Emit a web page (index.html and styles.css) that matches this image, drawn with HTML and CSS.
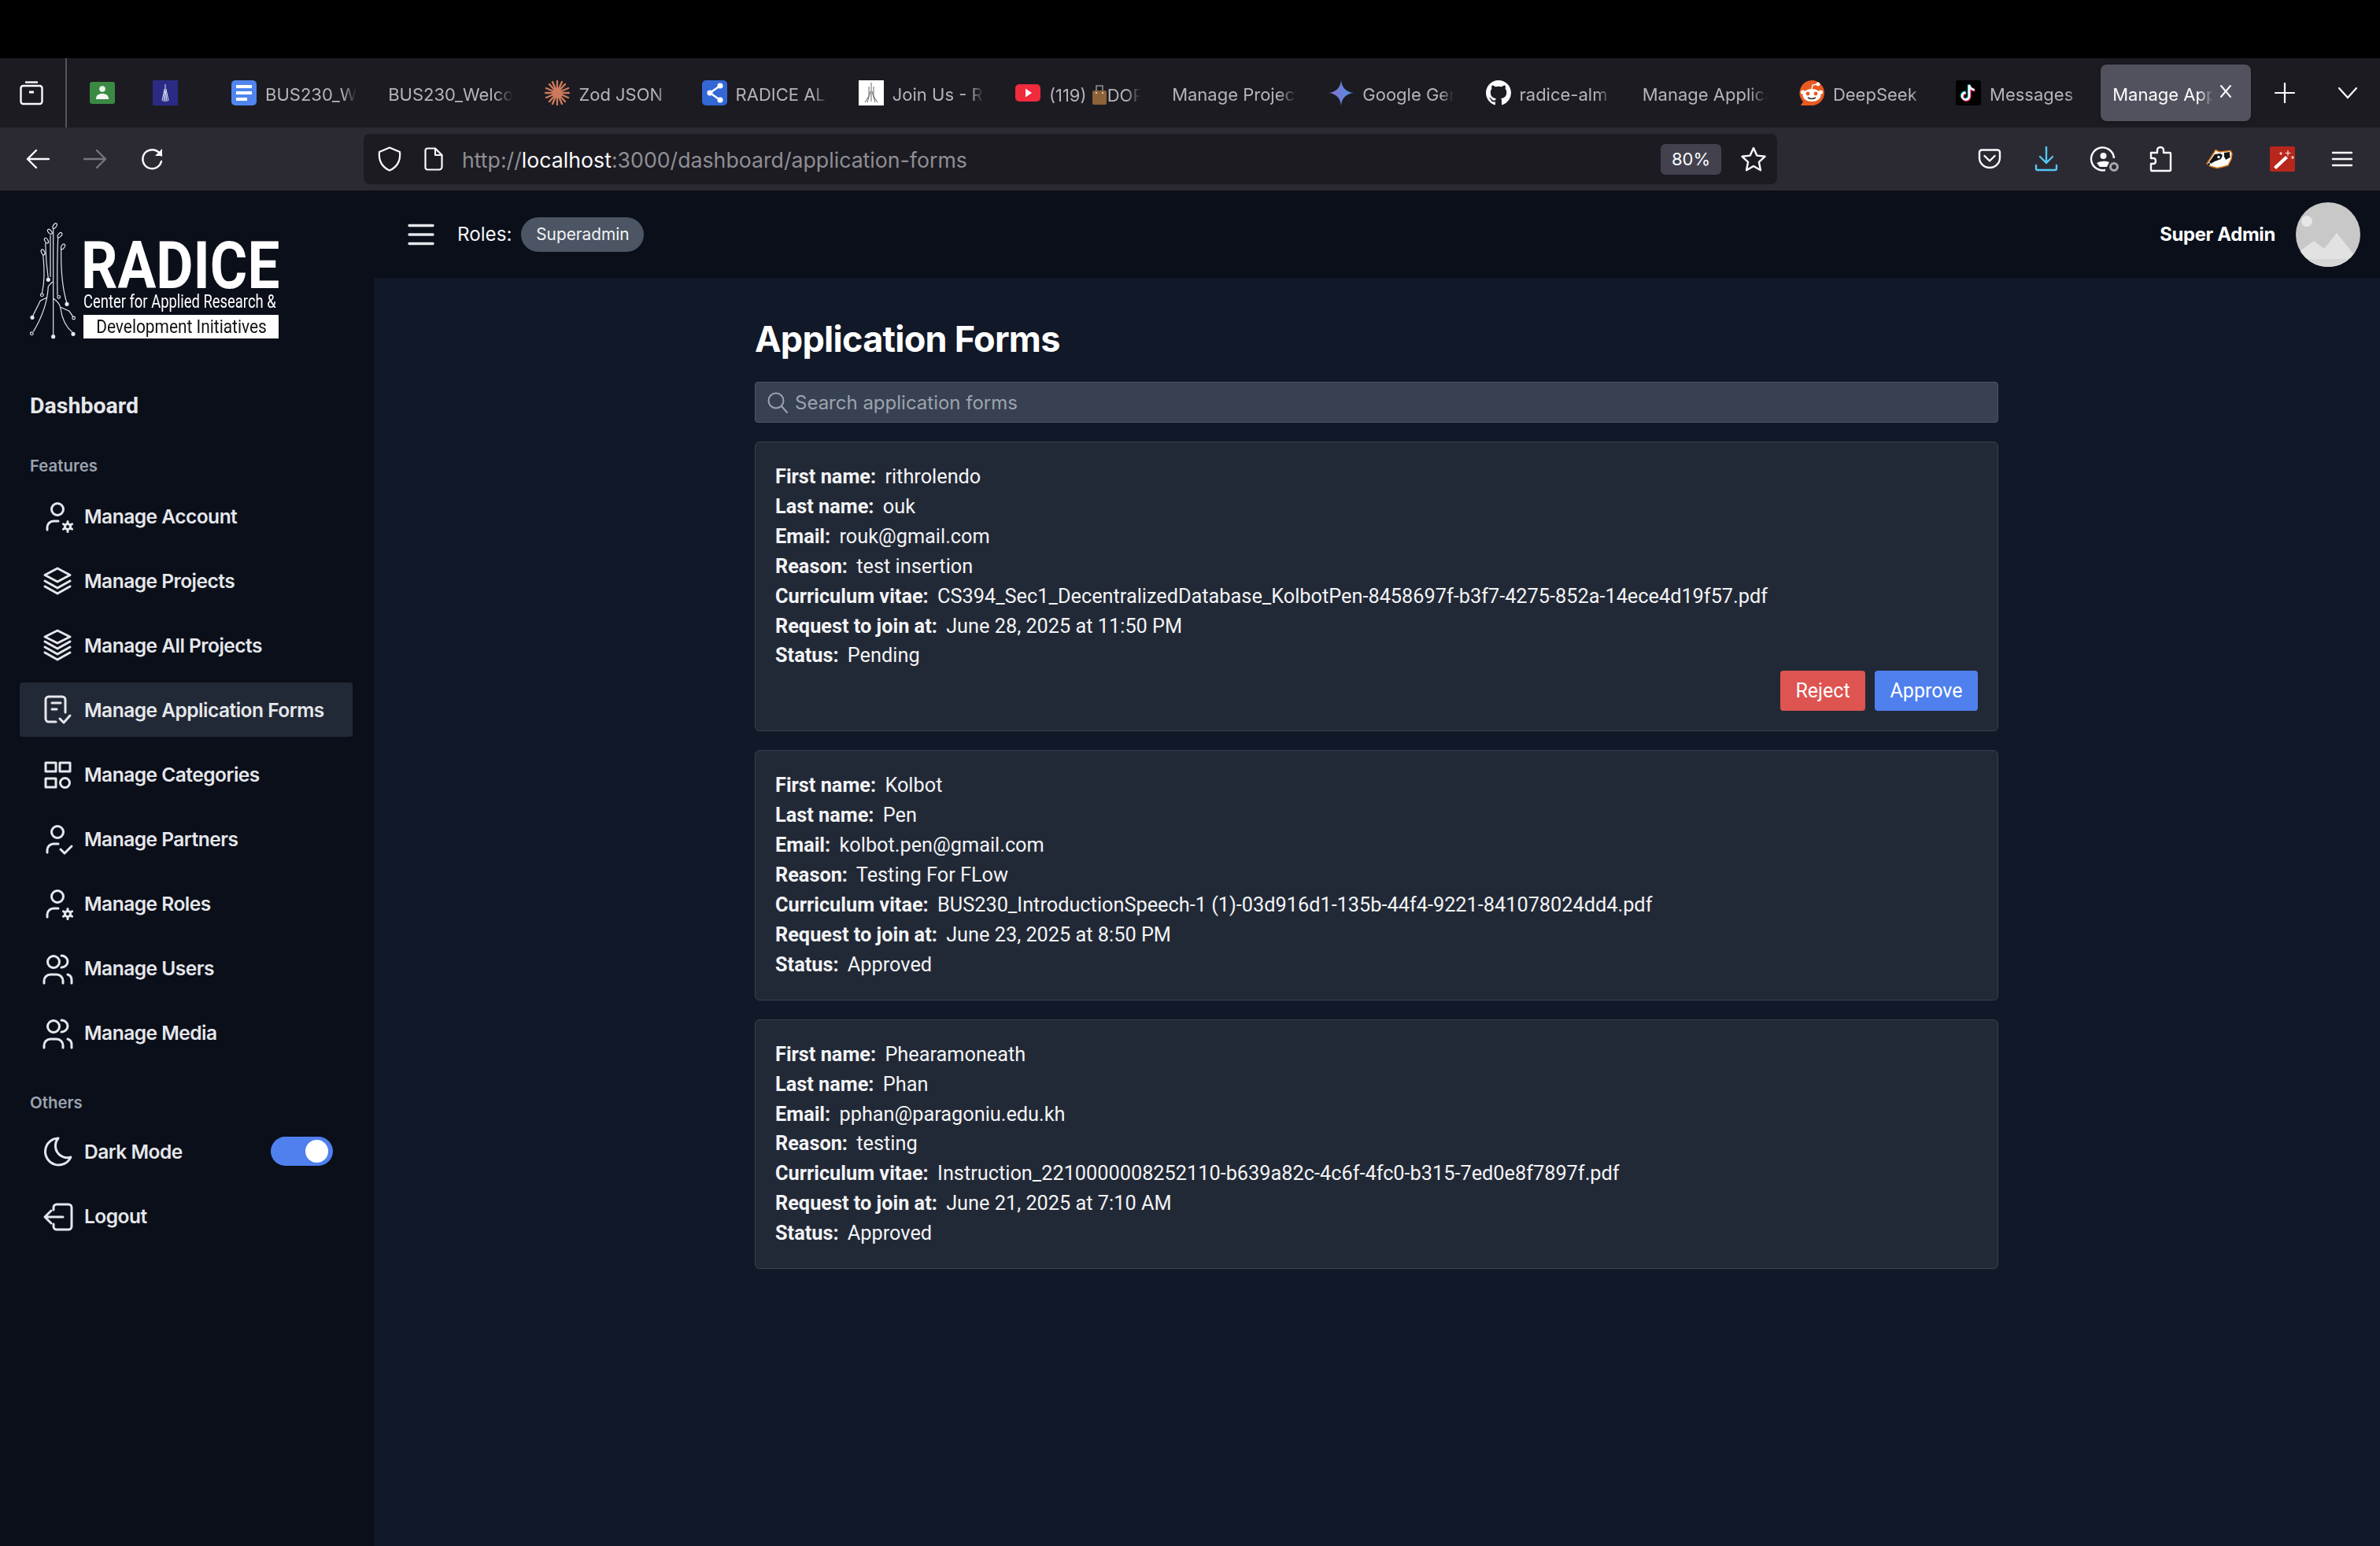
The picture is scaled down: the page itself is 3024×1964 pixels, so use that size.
FILE: index.html
```html
<!DOCTYPE html>
<html lang="en">
<head>
    <meta charset="UTF-8">
    <title>Manage Application Forms</title>
    <link rel="stylesheet" href="styles.css">
</head>
<body>
    <div class="top-black"></div>

    <!-- browser tabs -->
    <div class="tabbar">
        <div class="view-btn">
            <svg width="32" height="32" viewBox="0 0 32 32" fill="none" stroke="#fbfbfe" stroke-width="2.4"><path d="M8 2.5h16"/><rect x="2.5" y="7" width="27" height="23" rx="3"/><path d="M13 15h6" stroke-width="3"/></svg>
        </div>
        <div class="pinned">
            <svg width="32" height="32" viewBox="0 0 32 32"><rect y="2" width="32" height="28" rx="3" fill="#3b8a44"/><circle cx="16" cy="11" r="3.800" fill="#eef5ee"/><path d="M8 24c0-5 3-7 8-7s8 2 8 7z" fill="#f2f7f2"/></svg>
        </div>
        <div class="pinned">
            <svg width="32" height="32" viewBox="0 0 32 32" fill="none"><rect width="32" height="32" fill="#2b2b85"/><path d="M16 5v22M15 11l-3 15M17 11l3 15M15.500 14l-1.500 13M16.500 14l1.500 13" stroke="#e4e6fa" stroke-width="1"/></svg>
        </div>

        <div class="tab">
            <svg class="tab-icon" width="32" height="32" viewBox="0 0 32 32"><rect width="32" height="32" rx="5" fill="#5085ee"/><path d="M6 6h20v4H6zM6 14h20v4H6zM6 22h14v4H6z" fill="#fff"/></svg>
            <span class="tab-text">BUS230_Welcome</span>
        </div>
        <div class="tab">
            <span class="tab-text">BUS230_Welcome</span>
        </div>
        <div class="tab">
            <svg class="tab-icon" width="32" height="32" viewBox="0 0 32 32" stroke="#cc7a5c" stroke-width="2.4" stroke-linecap="round"><path d="M16 1v30M1 16h30M6 5l20 22M26 5L6 27M10 2l12 28M22 2L10 30M2 10l28 12M30 10L2 22"/></svg>
            <span class="tab-text">Zod JSON Schema</span>
        </div>
        <div class="tab">
            <svg class="tab-icon" width="32" height="32" viewBox="0 0 32 32"><rect width="32" height="32" rx="5" fill="#3367d6"/><path d="M23 7L10 16l13 9" fill="none" stroke="#fff" stroke-width="2.4"/><circle cx="23" cy="7" r="3.6" fill="#fff"/><circle cx="10" cy="16" r="3.6" fill="#fff"/><circle cx="23" cy="25" r="3.6" fill="#fff"/></svg>
            <span class="tab-text">RADICE ALM</span>
        </div>
        <div class="tab">
            <svg class="tab-icon" width="32" height="32" viewBox="0 0 32 32" fill="none"><rect width="32" height="32" fill="#fff"/><path d="M16 3v24M13 8v12l-5 8M19 8v12l5 8M15 14l-4 14M17 14l4 14" stroke="#666" stroke-width="1"/></svg>
            <span class="tab-text">Join Us - RADICE</span>
        </div>
        <div class="tab">
            <svg class="tab-icon" width="32" height="32" viewBox="0 0 32 32"><rect y="5" width="32" height="22" rx="5" fill="#ef2b3c"/><path d="M13 10.500l8 5.500-8 5.500z" fill="#fff"/></svg>
            <span class="tab-text">(119) <svg class="bag" width="20" height="28" viewBox="0 0 20 28" fill="none"><path d="M6 10V3h8v7" stroke="#8d8f96" stroke-width="1.600"/><rect x="1" y="9" width="18" height="18" rx="2" fill="#8d6239"/><circle cx="6" cy="12" r="1.200" fill="#d7c0a0"/><circle cx="14" cy="12" r="1.200" fill="#d7c0a0"/></svg>DOPE</span>
        </div>
        <div class="tab">
            <span class="tab-text">Manage Projects</span>
        </div>
        <div class="tab">
            <svg class="tab-icon" width="32" height="32" viewBox="0 0 32 32"><defs><linearGradient id="gem" x1="0" y1="0.5" x2="1" y2="0.5"><stop offset="0" stop-color="#8a6fd0"/><stop offset="1" stop-color="#4c8fe0"/></linearGradient></defs><path d="M16 0c1 9 6 15 16 16-10 1-15 7-16 16-1-9-6-15-16-16 10-1 15-7 16-16z" fill="url(#gem)"/></svg>
            <span class="tab-text">Google Gemini</span>
        </div>
        <div class="tab">
            <svg class="tab-icon" width="32" height="32" viewBox="0 0 16 16"><path fill="#fbfbfe" d="M8 0C3.58 0 0 3.58 0 8c0 3.54 2.29 6.53 5.47 7.59.4.07.55-.17.55-.38 0-.19-.01-.82-.01-1.49-2.01.37-2.53-.49-2.69-.94-.09-.23-.48-.94-.82-1.13-.28-.15-.68-.52-.01-.53.63-.01 1.08.58 1.23.82.72 1.21 1.87.87 2.33.66.07-.52.28-.87.51-1.07-1.78-.2-3.64-.89-3.64-3.95 0-.87.31-1.59.82-2.15-.08-.2-.36-1.02.08-2.12 0 0 .67-.21 2.2.82.64-.18 1.32-.27 2-.27.68 0 1.36.09 2 .27 1.53-1.04 2.2-.82 2.2-.82.44 1.1.16 1.92.08 2.12.51.56.82 1.27.82 2.15 0 3.07-1.87 3.75-3.65 3.95.29.25.54.73.54 1.48 0 1.07-.01 1.93-.01 2.2 0 .21.15.46.55.38A8.013 8.013 0 0016 8c0-4.42-3.58-8-8-8z"/></svg>
            <span class="tab-text">radice-alm</span>
        </div>
        <div class="tab">
            <span class="tab-text">Manage Applications</span>
        </div>
        <div class="tab">
            <svg class="tab-icon" width="32" height="32" viewBox="0 0 32 32"><path d="M16 0a16 16 0 0 1 0 32H2l3-5A16 16 0 0 1 16 0z" fill="#ea5a21"/><path d="M16 11l1-5 6-1" fill="none" stroke="#fff" stroke-width="1.400"/><circle cx="24" cy="5" r="2.400" fill="#fff"/><circle cx="4.500" cy="15" r="2.600" fill="#fff"/><circle cx="27.500" cy="15" r="2.600" fill="#fff"/><ellipse cx="16" cy="19" rx="11.500" ry="8" fill="#fff"/><circle cx="11" cy="17" r="2.400" fill="#ea5a21"/><circle cx="21" cy="17" r="2.400" fill="#ea5a21"/><path d="M11 22q5 3 10 0" stroke="#3a2a25" stroke-width="1.600" fill="none"/></svg>
            <span class="tab-text">DeepSeek</span>
        </div>
        <div class="tab">
            <svg class="tab-icon" width="32" height="32" viewBox="0 0 32 32" fill="none" stroke-width="3.200"><rect width="32" height="32" rx="3" fill="#000"/><path d="M16.500 5.500v14a4.500 4.500 0 1 1-4.500-4.500M16.500 5.500q1 5.500 6.500 6" stroke="#25f4ee"/><path d="M18 7v14a4.500 4.500 0 1 1-4.500-4.500M18 7q1 5.500 6.500 6" stroke="#ee1d52"/><path d="M17.200 6.200v14a4.500 4.500 0 1 1-4.500-4.500M17.200 6.200q1 5.500 6.500 6" stroke="#fff" stroke-width="2.400"/></svg>
            <span class="tab-text">Messages | TikTok</span>
        </div>
        <div class="tab tab-active">
            <span class="tab-text">Manage Applications</span>
            <svg class="tab-close" width="18" height="18" viewBox="0 0 18 18" stroke="#fbfbfe" stroke-width="2" stroke-linecap="round"><path d="M3 2l12 14M15 2L3 16"/></svg>
        </div>
        <svg class="new-tab" width="26" height="26" viewBox="0 0 26 26" stroke="#fbfbfe" stroke-width="2.200" stroke-linecap="round"><path d="M13 1v24M1 13h24"/></svg>
        <svg class="all-tabs" width="26" height="16" viewBox="0 0 26 16" fill="none" stroke="#fbfbfe" stroke-width="2.200" stroke-linecap="round"><path d="M2 2l11 12L24 2"/></svg>
    </div>

    <!-- browser toolbar -->
    <div class="navbar">
        <div class="nav-arrows">
            <svg width="30" height="26" viewBox="0 0 30 26" fill="none" stroke="#fbfbfe" stroke-width="2.400" stroke-linecap="round" stroke-linejoin="round"><path d="M29 13H2M13 2L2 13l11 11"/></svg>
            <svg width="30" height="26" viewBox="0 0 30 26" fill="none" stroke="#77767d" stroke-width="2.400" stroke-linecap="round" stroke-linejoin="round"><path d="M1 13h27M17 2l11 11-11 11"/></svg>
            <svg width="30" height="30" viewBox="0 0 30 30" fill="none" stroke="#fbfbfe" stroke-width="2.400" stroke-linecap="round" stroke-linejoin="round"><path d="M26 18A12 12 0 1 1 17 3.500c4 1 7 3.500 9 7"/><path d="M27 2v9h-9" fill="#fbfbfe" stroke="none"/></svg>
        </div>
        <div class="urlbar">
            <svg width="30" height="32" viewBox="0 0 30 32" fill="none" stroke="#fbfbfe" stroke-width="2.200" stroke-linejoin="round"><path d="M15 1.500L28 7c1 10-3 19-13 23.500C5 26 1 17 2 7z"/></svg>
            <svg class="page-icon" width="24" height="30" viewBox="0 0 24 30" fill="none" stroke="#fbfbfe" stroke-width="2.200" stroke-linejoin="round"><path d="M4 1.500h10l8.500 8.500v15a3.500 3.500 0 0 1-3.500 3.500H4A2.500 2.500 0 0 1 1.500 26V4A2.500 2.500 0 0 1 4 1.500zM14 1.500V10h8.500"/></svg>
            <span class="url">http://<b class="url-host">localhost</b>:3000/dashboard/application-forms</span>
            <span class="zoom-badge">80%</span>
            <svg class="star" width="32" height="32" viewBox="0 0 32 32" fill="none" stroke="#fbfbfe" stroke-width="2.400" stroke-linejoin="round"><path d="M16 2l4.300 9.600 10.200 1.200-7.600 7 2.100 10.400L16 25l-9 5.200 2.100-10.400-7.600-7 10.200-1.200z"/></svg>
        </div>
        <div class="nav-tools">
            <svg width="40" height="34" viewBox="0 0 40 34" fill="none" stroke="#fbfbfe" stroke-width="2.400" stroke-linecap="round" stroke-linejoin="round"><path d="M10 5.500h20a3 3 0 0 1 3 3v7c0 7-6 12.500-13 12.500S7 22.500 7 15.500v-7a3 3 0 0 1 3-3zM13.500 13l6.500 6.500 6.500-6.500"/></svg>
            <svg width="40" height="34" viewBox="3 0 40 34" fill="none" stroke="#53c8f4" stroke-width="2.400" stroke-linecap="round" stroke-linejoin="round"><path d="M20 2v20M12 14l8 8 8-8M7 25v4a2 2 0 0 0 2 2h22a2 2 0 0 0 2-2v-4"/></svg>
            <svg width="40" height="34" viewBox="3 0 40 34" fill="none" stroke="#fbfbfe" stroke-width="2.400"><path d="M21 31A14.500 14.500 0 1 1 32 16"/><circle cx="18.500" cy="13" r="4" fill="#fbfbfe" stroke="none"/><path d="M10 22q8-4 16-1l-3 6H14z" fill="#fbfbfe" stroke="none"/><circle cx="32" cy="27" r="4.500" stroke="#a8a8ae" stroke-width="3"/></svg>
            <svg width="40" height="34" viewBox="7 0 40 34" fill="none" stroke="#fbfbfe" stroke-width="2.400" stroke-linejoin="round"><path d="M20 2c-3 0-4 2-4 4v3H8v7h3c4 0 4 7 0 7H8v8a1 1 0 0 0 1 1h23a1 1 0 0 0 1-1V10a1 1 0 0 0-1-1h-8V6c0-2-1-4-4-4z"/></svg>
            <svg width="40" height="34" viewBox="6 0 40 34"><path d="M4 23L13 9l2-3.500L20 8l5-.5 9-1 2 3.500-1 7-4 8-7 2-7 1.500L8 26z" fill="#fff" stroke="#d97d22" stroke-width="1.500" stroke-linejoin="round"/><path d="M7 21l7-10 7-1 3 2-2 5-8 3-5 3zM26 9l7-1 .5 7-5.500 3-2-4z" fill="#141414"/><circle cx="19" cy="14.500" r="1.700" fill="#fff"/><circle cx="6.500" cy="23.500" r="1.500" fill="#141414"/></svg>
            <svg width="40" height="34" viewBox="1 0 40 34"><rect x="4" y="1" width="32" height="32" rx="2" fill="#b8261c"/><path d="M9 27L24 13l3 3L12 30z" fill="#fff"/><path d="M27 6v7M23.500 9.500h7M33 13v4M31 15h4M18 8v4M16 10h4" stroke="#f8e4e0" stroke-width="1.200"/></svg>
            <svg width="40" height="28" viewBox="0 0 40 28" stroke="#fbfbfe" stroke-width="2.400" stroke-linecap="round"><path d="M8 6h24M8 14h24M8 22h24"/></svg>
        </div>
    </div>

    <div class="app">
        <aside class="sidebar">
            <div class="logo">
                <svg class="logo-tree" width="64" height="150" viewBox="110 90 190 450" fill="none" stroke="#e9e9ec" stroke-width="3.500">
                    <path d="M204 522V112M193 140v160M222 150q-4 100-2 220M234 192q-2 130 22 208M174 170q2 70 11 136M165 214q10 90-4 148M201 318l-16 17q-4 85-57 173M180 378l-25 12q-15 30-30 60M205 382q25 18 27 38 8 60 46 92M232 415l33 15 15 22"/>
                    <ellipse cx="210" cy="105" rx="6" ry="11" transform="rotate(35 210 105)"/>
                    <ellipse cx="191" cy="127" rx="6" ry="11" transform="rotate(-40 191 127)"/>
                    <ellipse cx="229" cy="140" rx="6" ry="11" transform="rotate(40 229 140)"/>
                    <ellipse cx="178" cy="161" rx="6" ry="11" transform="rotate(-30 178 161)"/>
                    <ellipse cx="241" cy="184" rx="6" ry="11" transform="rotate(30 241 184)"/>
                    <ellipse cx="165" cy="205" rx="6" ry="11" transform="rotate(-25 165 205)"/>
                    <circle cx="204" cy="527" r="6" fill="#e9e9ec"/>
                    <circle cx="225" cy="376" r="5.500"/>
                    <circle cx="256" cy="403" r="6" fill="#e9e9ec"/>
                    <circle cx="185" cy="310" r="6" fill="#e9e9ec"/>
                    <circle cx="161" cy="368" r="5.500"/>
                    <circle cx="122" cy="515" r="5.500"/>
                    <circle cx="124" cy="454" r="6" fill="#e9e9ec"/>
                    <circle cx="280" cy="517" r="6" fill="#e9e9ec"/>
                    <circle cx="282" cy="456" r="5.500"/>
                </svg>
                <div class="logo-words">
                    <div class="logo-name">RADICE</div>
                    <div class="logo-line">Center for Applied Research &amp;</div>
                    <div class="logo-box"><span class="logo-box-text">Development Initiatives</span></div>
                </div>
            </div>

            <div class="side-title">Dashboard</div>
            <div class="side-label">Features</div>

            <ul class="menu">
                <li class="menu-item">
                    <svg class="menu-icon" viewBox="0 0 44 44"><circle cx="20" cy="13" r="7.500"/><path d="M7 39v-3a8 8 0 0 1 8-8h6"/><circle cx="33" cy="35" r="3.500"/><path d="M33 28.500v2M33 39.500v2M27.400 31.700l1.700 1M36.900 37.300l1.700 1M27.400 38.300l1.700-1M36.900 32.700l1.700-1"/></svg>
                    Manage Account
                </li>
                <li class="menu-item">
                    <svg class="menu-icon" viewBox="0 0 44 44"><path d="M20 6l16 8.500-16 8.500-16-8.500zM4 22l16 9 16-9M4 29l16 9 16-9"/></svg>
                    Manage Projects
                </li>
                <li class="menu-item">
                    <svg class="menu-icon" viewBox="0 0 44 44"><path d="M20 3l16 8-16 8-16-8zM4 17l16 9 16-9M4 24l16 9 16-9M4 31l16 9 16-9"/></svg>
                    Manage All Projects
                </li>
                <li class="menu-item menu-active">
                    <svg class="menu-icon" viewBox="0 0 44 44"><path d="M18 37H9a4 4 0 0 1-4-4V9a4 4 0 0 1 4-4h17a4 4 0 0 1 4 4v16M13 13h11M13 21h6M23 33l5 5 8-9"/></svg>
                    Manage Application Forms
                </li>
                <li class="menu-item">
                    <svg class="menu-icon" viewBox="0 0 44 44"><rect x="5" y="7" width="13" height="11"/><rect x="23" y="7" width="13" height="11"/><rect x="5" y="27" width="13" height="11"/><circle cx="29.500" cy="32.500" r="6"/></svg>
                    Manage Categories
                </li>
                <li class="menu-item">
                    <svg class="menu-icon" viewBox="0 0 44 44"><circle cx="20" cy="13" r="7.500"/><path d="M7 39v-3a8 8 0 0 1 8-8h6M24 35l5 5 9-9"/></svg>
                    Manage Partners
                </li>
                <li class="menu-item">
                    <svg class="menu-icon" viewBox="0 0 44 44"><circle cx="20" cy="13" r="7.500"/><path d="M7 39v-3a8 8 0 0 1 8-8h6"/><circle cx="33" cy="35" r="3.500"/><path d="M33 28.500v2M33 39.500v2M27.400 31.700l1.700 1M36.900 37.300l1.700 1M27.400 38.300l1.700-1M36.900 32.700l1.700-1"/></svg>
                    Manage Roles
                </li>
                <li class="menu-item">
                    <svg class="menu-icon" viewBox="0 0 44 44"><circle cx="15" cy="14" r="7.500"/><path d="M25 6c4 0 8 3 8 7.500S29 21 25 21M3 41v-3a8 8 0 0 1 8-8h8a8 8 0 0 1 8 8v3M33 30c3 1 5 4 5 7v4"/></svg>
                    Manage Users
                </li>
                <li class="menu-item">
                    <svg class="menu-icon" viewBox="0 0 44 44"><circle cx="15" cy="14" r="7.500"/><path d="M25 6c4 0 8 3 8 7.500S29 21 25 21M3 41v-3a8 8 0 0 1 8-8h8a8 8 0 0 1 8 8v3M33 30c3 1 5 4 5 7v4"/></svg>
                    Manage Media
                </li>
            </ul>

            <div class="side-label others-label">Others</div>
            <ul class="menu">
                <li class="menu-item">
                    <svg class="menu-icon" viewBox="0 0 44 44"><path d="M21 5A17 17 0 1 0 37 29 A 15 15 0 0 1 21 5z"/></svg>
                    Dark Mode
                    <span class="toggle"><span class="toggle-knob"></span></span>
                </li>
                <li class="menu-item">
                    <svg class="menu-icon" viewBox="0 0 44 44"><path d="M15 14v-3a4 4 0 0 1 4-4h15a4 4 0 0 1 4 4v24a4 4 0 0 1-4 4H19a4 4 0 0 1-4-4v-3M27 23H4M12 15l-8 8 8 8"/></svg>
                    Logout
                </li>
            </ul>
        </aside>

        <div class="right">
            <header class="topbar">
                <svg class="burger" width="34" height="28" viewBox="0 0 34 28" stroke="#e5e7eb" stroke-width="3.400" stroke-linecap="round"><path d="M2 2.500h30M2 14h30M2 25.500h30"/></svg>
                <span class="roles">Roles:</span>
                <span class="role-pill">Superadmin</span>
                <span class="admin-name">Super Admin</span>
                <svg class="avatar" width="82" height="82" viewBox="0 0 82 82"><defs><clipPath id="av"><circle cx="41" cy="41" r="41"/></clipPath></defs><g clip-path="url(#av)"><rect width="82" height="82" fill="#c8c8c8"/><circle cx="14" cy="24" r="7" fill="#e6e6e6"/><path d="M5 82V62l18-13 13 10 16-20 24 30v13z" fill="#e2e2e2"/><path d="M0 72h82v10H0z" fill="#d6d6d6"/></g></svg>
            </header>

            <main class="content">
                <h1 class="page-title">Application Forms</h1>
                <div class="search">
                    <svg width="26" height="28" viewBox="0 0 26 28" fill="none" stroke="#9ca3af" stroke-width="2" stroke-linecap="round"><circle cx="11" cy="12" r="9.500"/><path d="M18 19l7 8"/></svg>
                    <span>Search application forms</span>
                </div>

                <div class="form-card">
                    <p><b>First name:</b> rithrolendo</p>
                    <p><b>Last name:</b> ouk</p>
                    <p><b>Email:</b> rouk@gmail.com</p>
                    <p><b>Reason:</b> test insertion</p>
                    <p><b>Curriculum vitae:</b> CS394_Sec1_DecentralizedDatabase_KolbotPen-8458697f-b3f7-4275-852a-14ece4d19f57.pdf</p>
                    <p><b>Request to join at:</b> June 28, 2025 at 11:50 PM</p>
                    <p><b>Status:</b> Pending</p>
                    <div class="card-actions">
                        <button class="btn btn-reject">Reject</button>
                        <button class="btn btn-approve">Approve</button>
                    </div>
                </div>

                <div class="form-card">
                    <p><b>First name:</b> Kolbot</p>
                    <p><b>Last name:</b> Pen</p>
                    <p><b>Email:</b> kolbot.pen@gmail.com</p>
                    <p><b>Reason:</b> Testing For FLow</p>
                    <p><b>Curriculum vitae:</b> BUS230_IntroductionSpeech-1 (1)-03d916d1-135b-44f4-9221-841078024dd4.pdf</p>
                    <p><b>Request to join at:</b> June 23, 2025 at 8:50 PM</p>
                    <p><b>Status:</b> Approved</p>
                </div>

                <div class="form-card">
                    <p><b>First name:</b> Phearamoneath</p>
                    <p><b>Last name:</b> Phan</p>
                    <p><b>Email:</b> pphan@paragoniu.edu.kh</p>
                    <p><b>Reason:</b> testing</p>
                    <p><b>Curriculum vitae:</b> Instruction_2210000008252110-b639a82c-4c6f-4fc0-b315-7ed0e8f7897f.pdf</p>
                    <p><b>Request to join at:</b> June 21, 2025 at 7:10 AM</p>
                    <p><b>Status:</b> Approved</p>
                </div>
            </main>
        </div>
    </div>
</body>
</html>
```

FILE: styles.css
```css
* {
    box-sizing: border-box;
}
html, body {
    margin: 0;
    height: 100%;
}
body {
    display: flex;
    flex-direction: column;
    width: 3024px;
    height: 1964px;
    overflow: hidden;
    background: #111827;
    color: #e5e7eb;
    font-family: "Inter", sans-serif;
}
.top-black {
    height: 74px;
    background: #000;
}

/* browser tabs */
.tabbar {
    display: flex;
    align-items: center;
    height: 88px;
    background: #1c1b22;
}
.view-btn {
    display: flex;
    align-items: center;
    width: 85px;
    height: 88px;
    padding-left: 24px;
    border-right: 2px solid #55545c;
}
.pinned {
    width: 80px;
    padding-left: 29px;
    display: flex;
}
.tab {
    display: flex;
    align-items: center;
    flex: none;
    width: 191px;
    height: 72px;
    margin-right: 8.2px;
    padding-left: 15px;
    border-radius: 8px;
}
.pinned + .tab {
    margin-left: 34px;
}
.tab-icon {
    flex: none;
    margin-right: 11px;
}
.tab-text {
    flex: 1;
    min-width: 0;
    margin-right: 17px;
    padding-top: 3px;
    overflow: hidden;
    white-space: nowrap;
    font-size: 22px;
    color: #b4b4b8;
    -webkit-mask-image: linear-gradient(to right, #000 85%, transparent);
    mask-image: linear-gradient(to right, #000 85%, transparent);
}
.bag {
    vertical-align: -5px;
}
.tab-active {
    background: #52525e;
    box-shadow: 0 1px 3px rgba(0, 0, 0, 0.4);
}
.tab-active .tab-text {
    color: #fbfbfe;
    margin-right: 7px;
}
.tab-close {
    flex: none;
    margin-right: 23px;
    margin-bottom: 4px;
}
.new-tab {
    margin-left: 22px;
}
.all-tabs {
    margin-left: 54px;
}

/* browser toolbar */
.navbar {
    display: flex;
    align-items: center;
    height: 80px;
    background: #2b2a33;
}
.nav-arrows {
    display: flex;
    align-items: center;
    gap: 43px;
    width: 462px;
    padding-left: 33px;
}
.urlbar {
    display: flex;
    align-items: center;
    width: 1796px;
    height: 64px;
    padding: 0 14px 0 18px;
    border-radius: 8px;
    background: #1c1b22;
}
.page-icon {
    margin-left: 29px;
}
.url {
    flex: 1;
    margin-left: 24px;
    padding-top: 1px;
    font-size: 26.7px;
    color: #8f8f94;
}
.url-host {
    font-weight: 400;
    color: #fbfbfe;
}
.zoom-badge {
    width: 77px;
    height: 39px;
    border-radius: 6px;
    background: #42414d;
    color: #fbfbfe;
    font-size: 22px;
    line-height: 39px;
    text-align: center;
}
.star {
    margin-left: 25px;
}
.nav-tools {
    display: flex;
    align-items: center;
    gap: 34.6px;
    margin-left: 250px;
}
.nav-tools svg {
    overflow: visible;
}

/* app layout */
.app {
    display: flex;
    flex: 1;
    min-height: 0;
}
.sidebar {
    flex: none;
    width: 475px;
    padding: 40px 27px 0 25px;
    background: #0b0f1a;
}
.logo {
    display: flex;
    align-items: flex-start;
    padding-left: 11px;
}
.logo-words {
    width: 248px;
    margin: 25px 0 0 6px;
    color: #fff;
}
.logo-name {
    height: 62px;
    margin-left: -3px;
    font-family: "Roboto", sans-serif;
    font-weight: 700;
    font-size: 84px;
    line-height: 62px;
    white-space: nowrap;
    transform: scaleX(0.865);
    transform-origin: left center;
}
.logo-line {
    margin-top: 1px;
    font-family: "Roboto", sans-serif;
    font-size: 23px;
    line-height: 27px;
    white-space: nowrap;
    transform: scaleX(0.8);
    transform-origin: left center;
}
.logo-box {
    display: flex;
    justify-content: center;
    height: 30px;
    margin-top: 3px;
    background: #fff;
    color: #111;
    font-family: "Roboto", sans-serif;
    font-size: 24px;
    line-height: 30px;
    white-space: nowrap;
    overflow: hidden;
}
.logo-box-text {
    flex: none;
    transform: scaleX(0.87);
}
.side-title {
    margin: 66px 0 0 13px;
    font-family: "Roboto", sans-serif;
    font-weight: 700;
    font-size: 28.5px;
    line-height: 36px;
}
.side-label {
    margin: 45px 0 0 13px;
    color: #9ca3af;
    font-weight: 600;
    font-size: 20.4px;
    line-height: 26px;
}
.others-label {
    margin-top: 42px;
}
.menu {
    margin: 0;
    padding: 16px 0 0;
    list-style: none;
}
.others-label + .menu {
    padding-top: 14px;
}
.menu-item {
    display: flex;
    align-items: center;
    height: 69px;
    margin-bottom: 13px;
    padding-left: 28px;
    border-radius: 4px;
    font-weight: 600;
    font-size: 24.5px;
    letter-spacing: -0.5px;
    white-space: nowrap;
}
.menu-active {
    background: #222936;
}
.menu-icon {
    flex: none;
    width: 44px;
    height: 44px;
    margin-right: 10px;
    fill: none;
    stroke: #e5e7eb;
    stroke-width: 3;
    stroke-linecap: round;
    stroke-linejoin: round;
}
.toggle {
    display: flex;
    align-items: center;
    justify-content: flex-end;
    width: 79px;
    height: 37px;
    margin-left: auto;
    margin-right: 25px;
    padding-right: 6px;
    border-radius: 19px;
    background: #4f80ee;
}
.toggle-knob {
    width: 29px;
    height: 29px;
    border-radius: 50%;
    background: #fff;
}

/* right column */
.right {
    flex: 1;
    min-width: 0;
    display: flex;
    flex-direction: column;
}
.topbar {
    display: flex;
    align-items: center;
    flex: none;
    height: 111px;
    padding: 0 25px 0 43px;
    background: #0b0f1a;
}
.burger {
    margin-right: 29px;
}
.roles {
    margin-right: 12px;
    color: #f3f4f6;
    font-size: 24.2px;
}
.role-pill {
    width: 156px;
    height: 44px;
    border-radius: 22px;
    background: #4b5563;
    color: #f3f4f6;
    font-size: 20.8px;
    line-height: 44px;
    text-align: center;
}
.admin-name {
    margin-left: auto;
    margin-right: 26px;
    color: #fff;
    font-weight: 700;
    font-size: 23.8px;
    letter-spacing: -0.3px;
}
.avatar {
    flex: none;
}
.content {
    width: 1580px;
    margin: 0 auto 0 484px;
}
.page-title {
    margin: 46px 0 0;
    color: #fff;
    font-weight: 700;
    font-size: 45px;
    letter-spacing: -0.75px;
    line-height: 64px;
}
.search {
    display: flex;
    align-items: center;
    height: 52px;
    margin: 22px 0 24px;
    padding-left: 15px;
    border: 1px solid #4b5563;
    border-radius: 4px;
    background: #374151;
    color: #9ca3af;
    font-size: 24px;
}
.search span {
    margin-left: 9px;
}
.form-card {
    margin-bottom: 24px;
    padding: 25px;
    border: 1px solid #374151;
    border-radius: 6px;
    background: #222936;
    color: #f3f4f6;
    font-family: "Roboto", sans-serif;
    font-size: 25.3px;
    line-height: 37.9px;
}
.form-card p {
    margin: 0;
    white-space: pre-wrap;
}
.form-card b {
    font-weight: 700;
    margin-right: 5px;
}
.card-actions {
    display: flex;
    justify-content: flex-end;
    gap: 12px;
}
.btn {
    height: 51px;
    border: 0;
    border-radius: 4px;
    color: #fff;
    font-family: "Roboto", sans-serif;
    font-size: 25px;
}
.btn-reject {
    width: 108px;
    background: #dd5450;
}
.btn-approve {
    width: 131px;
    background: #4f80ee;
}
```
